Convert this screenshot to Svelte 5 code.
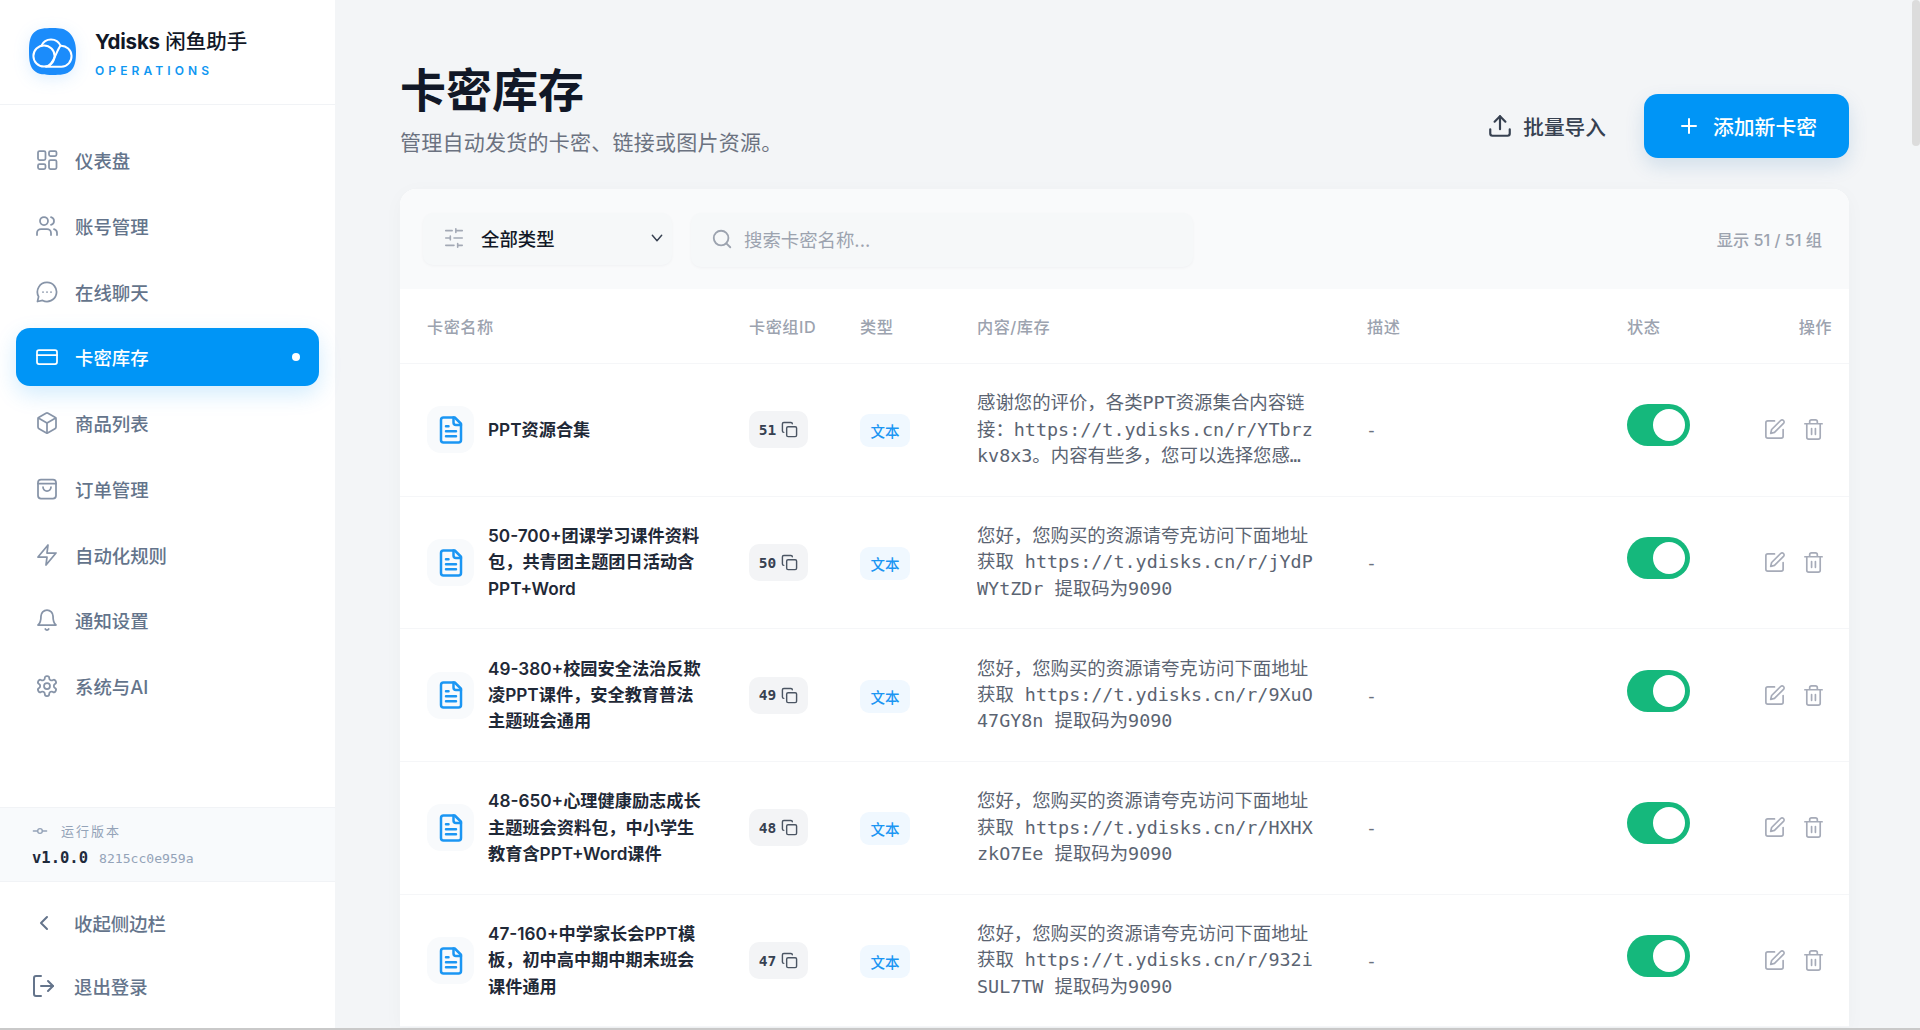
<script>
  const nav = [
    { label: '仪表盘', icon: 'grid' },
    { label: '账号管理', icon: 'users' },
    { label: '在线聊天', icon: 'chat' },
    { label: '卡密库存', icon: 'card', active: true },
    { label: '商品列表', icon: 'box' },
    { label: '订单管理', icon: 'bag' },
    { label: '自动化规则', icon: 'zap' },
    { label: '通知设置', icon: 'bell' },
    { label: '系统与AI', icon: 'gear' }
  ];

  const rows = [
    { id: 51, name: 'PPT资源合集', content: '感谢您的评价，各类PPT资源集合内容链接：https://t.ydisks.cn/r/YTbrzkv8x3。内容有些多，您可以选择您感兴趣的资源查看。' },
    { id: 50, name: '50-700+团课学习课件资料包，共青团主题团日活动含PPT+Word', content: '您好，您购买的资源请夸克访问下面地址获取 https://t.ydisks.cn/r/jYdPWYtZDr 提取码为9090' },
    { id: 49, name: '49-380+校园安全法治反欺凌PPT课件，安全教育普法主题班会通用', content: '您好，您购买的资源请夸克访问下面地址获取 https://t.ydisks.cn/r/9XuO47GY8n 提取码为9090' },
    { id: 48, name: '48-650+心理健康励志成长主题班会资料包，中小学生教育含PPT+Word课件', content: '您好，您购买的资源请夸克访问下面地址获取 https://t.ydisks.cn/r/HXHXzkO7Ee 提取码为9090' },
    { id: 47, name: '47-160+中学家长会PPT模板，初中高中期中期末班会课件通用', content: '您好，您购买的资源请夸克访问下面地址获取 https://t.ydisks.cn/r/932iSUL7TW 提取码为9090' }
  ];
</script>

<div class="page">
  <aside class="sidebar">
    <div class="brand">
      <svg class="logo" viewBox="0 0 47 47" width="47" height="47" aria-hidden="true">
        <path d="M23.5 0C31 0 36 .6 40 4.5S47 14 47 23.5 46 38.5 42 42.5 31 47 23.5 47 9 46.5 5 42.5 0 33 0 23.5 1 8.5 5 4.5 16 0 23.5 0z" fill="#1b8cfb" />
        <g fill="none" stroke="#fff" stroke-width="2" stroke-linecap="round" stroke-linejoin="round">
          <circle cx="15" cy="28" r="10.6" />
          <path d="M12.4 17.7A10.5 10.5 0 0 1 31.6 17.7" />
          <path d="M17 38.7H32.5A10.5 10.5 0 1 0 31.6 17.7C27.5 22 27 31 19.5 38.5" />
        </g>
      </svg>
      <div class="brand-text">
        <div class="brand-name"><b>Ydisks</b> 闲鱼助手</div>
        <div class="brand-sub">OPERATIONS</div>
      </div>
    </div>

    <nav class="nav">
      {#each nav as item}
        <div class="nav-item" class:active={item.active}>
          <svg class="ico" viewBox="0 0 24 24" width="24" height="24" fill="none" stroke="currentColor" stroke-width="1.75" stroke-linecap="round" stroke-linejoin="round" aria-hidden="true">
            {#if item.icon === 'grid'}
              <rect x="3" y="3" width="7.5" height="9" rx="1.5" />
              <rect x="14" y="3" width="7.5" height="5" rx="1.5" />
              <rect x="14" y="12" width="7.5" height="9" rx="1.5" />
              <rect x="3" y="16" width="7.5" height="5" rx="1.5" />
            {:else if item.icon === 'users'}
              <path d="M16 21v-2a4 4 0 0 0-4-4H6a4 4 0 0 0-4 4v2" />
              <circle cx="9" cy="7" r="4" />
              <path d="M22 21v-2a4 4 0 0 0-3-3.87" />
              <path d="M16 3.13a4 4 0 0 1 0 7.75" />
            {:else if item.icon === 'chat'}
              <path d="M12 2.5a9.5 9.5 0 1 1-4.4 17.9L2.5 21.5l1.1-4.9A9.5 9.5 0 0 1 12 2.5z" />
              <path d="M8 12h.01M12 12h.01M16 12h.01" />
            {:else if item.icon === 'card'}
              <rect x="2" y="5" width="20" height="14" rx="2" />
              <path d="M2 10h20" />
            {:else if item.icon === 'box'}
              <path d="M21 8a2 2 0 0 0-1-1.73l-7-4a2 2 0 0 0-2 0l-7 4A2 2 0 0 0 3 8v8a2 2 0 0 0 1 1.73l7 4a2 2 0 0 0 2 0l7-4A2 2 0 0 0 21 16z" />
              <path d="M3.3 7 12 12l8.7-5" />
              <path d="M12 22V12" />
            {:else if item.icon === 'bag'}
              <rect x="3" y="2.5" width="18" height="19" rx="3" />
              <path d="M3 6.5h18" />
              <path d="M8 10a4 4 0 0 0 8 0" />
            {:else if item.icon === 'zap'}
              <path d="M13 2 3 14h9l-1 8 10-12h-9z" />
            {:else if item.icon === 'bell'}
              <path d="M6 8a6 6 0 0 1 12 0c0 7 3 9 3 9H3s3-2 3-9" />
              <path d="M10.3 21a1.94 1.94 0 0 0 3.4 0" />
            {:else if item.icon === 'gear'}
              <path d="M12.22 2h-.44a2 2 0 0 0-2 2v.18a2 2 0 0 1-1 1.73l-.43.25a2 2 0 0 1-2 0l-.15-.08a2 2 0 0 0-2.73.73l-.22.38a2 2 0 0 0 .73 2.73l.15.1a2 2 0 0 1 1 1.72v.51a2 2 0 0 1-1 1.74l-.15.09a2 2 0 0 0-.73 2.73l.22.38a2 2 0 0 0 2.73.73l.15-.08a2 2 0 0 1 2 0l.43.25a2 2 0 0 1 1 1.73V20a2 2 0 0 0 2 2h.44a2 2 0 0 0 2-2v-.18a2 2 0 0 1 1-1.73l.43-.25a2 2 0 0 1 2 0l.15.08a2 2 0 0 0 2.73-.73l.22-.39a2 2 0 0 0-.73-2.73l-.15-.08a2 2 0 0 1-1-1.74v-.5a2 2 0 0 1 1-1.74l.15-.09a2 2 0 0 0 .73-2.73l-.22-.38a2 2 0 0 0-2.73-.73l-.15.08a2 2 0 0 1-2 0l-.43-.25a2 2 0 0 1-1-1.73V4a2 2 0 0 0-2-2z" />
              <circle cx="12" cy="12" r="3" />
            {/if}
          </svg>
          <span>{item.label}</span>
          {#if item.active}<i class="dot"></i>{/if}
        </div>
      {/each}
    </nav>

    <div class="version">
      <div class="version-label">
        <svg viewBox="0 0 24 24" width="16" height="16" fill="none" stroke="currentColor" stroke-width="2" stroke-linecap="round" aria-hidden="true">
          <circle cx="12" cy="12" r="3.5" />
          <path d="M2 12h6.5M15.5 12H22" />
        </svg>
        <span>运行版本</span>
      </div>
      <div class="version-line"><b>v1.0.0</b><span>8215cc0e959a</span></div>
    </div>

    <div class="foot">
      <div class="foot-item">
        <svg viewBox="0 0 24 24" width="24" height="24" fill="none" stroke="currentColor" stroke-width="2" stroke-linecap="round" stroke-linejoin="round" aria-hidden="true">
          <path d="m15 18-6-6 6-6" />
        </svg>
        <span>收起侧边栏</span>
      </div>
      <div class="foot-item">
        <svg viewBox="0 0 24 24" width="24" height="24" fill="none" stroke="currentColor" stroke-width="2" stroke-linecap="round" stroke-linejoin="round" aria-hidden="true">
          <path d="M9 2H4a2 2 0 0 0-2 2v16a2 2 0 0 0 2 2h5" />
          <path d="m16 17 5-5-5-5" />
          <path d="M21 12H9" />
        </svg>
        <span>退出登录</span>
      </div>
    </div>
  </aside>

  <main class="main">
    <header class="head">
      <div>
        <h1>卡密库存</h1>
        <p>管理自动发货的卡密、链接或图片资源。</p>
      </div>
      <div class="head-actions">
        <button type="button" class="btn-import">
          <svg viewBox="0 0 24 24" width="26" height="26" fill="none" stroke="currentColor" stroke-width="2" stroke-linecap="round" stroke-linejoin="round" aria-hidden="true">
            <path d="M21 15v4a2 2 0 0 1-2 2H5a2 2 0 0 1-2-2v-4" />
            <path d="m17 8-5-5-5 5" />
            <path d="M12 3v12" />
          </svg>
          批量导入
        </button>
        <button type="button" class="btn-add">
          <svg viewBox="0 0 24 24" width="24" height="24" fill="none" stroke="currentColor" stroke-width="2" stroke-linecap="round" aria-hidden="true">
            <path d="M5 12h14M12 5v14" />
          </svg>
          添加新卡密
        </button>
      </div>
    </header>

    <section class="card">
      <div class="toolbar">
        <div class="select">
          <svg viewBox="0 0 24 24" width="22" height="22" fill="none" stroke="#a3a9b5" stroke-width="1.75" stroke-linecap="round" aria-hidden="true">
            <path d="M21 4h-7M10 4H3M21 12h-9M8 12H3M21 20h-5M12 20H3M14 2v4M8 10v4M16 18v4" />
          </svg>
          <span>全部类型</span>
          <svg class="chev" viewBox="0 0 24 24" width="16" height="16" fill="none" stroke="#374151" stroke-width="2.2" stroke-linecap="round" stroke-linejoin="round" aria-hidden="true">
            <path d="m5 8 7 8 7-8" />
          </svg>
        </div>
        <div class="search">
          <svg viewBox="0 0 24 24" width="22" height="22" fill="none" stroke="#9ca3af" stroke-width="2" stroke-linecap="round" aria-hidden="true">
            <circle cx="11" cy="11" r="8" />
            <path d="m21 21-4.3-4.3" />
          </svg>
          <span>搜索卡密名称...</span>
        </div>
        <div class="count">显示 51 / 51 组</div>
      </div>

      <div class="cols thead">
        <div class="c-name">卡密名称</div>
        <div>卡密组ID</div>
        <div>类型</div>
        <div>内容/库存</div>
        <div>描述</div>
        <div>状态</div>
        <div class="c-op">操作</div>
      </div>

      {#each rows as row}
        <div class="cols row">
          <div class="c-name name">
            <span class="doc">
              <svg viewBox="0 0 24 24" width="30" height="30" fill="none" stroke="#1b96f3" stroke-width="2" stroke-linecap="round" stroke-linejoin="round" aria-hidden="true">
                <path d="M15 2H6a2 2 0 0 0-2 2v16a2 2 0 0 0 2 2h12a2 2 0 0 0 2-2V7z" />
                <path d="M14 2v4a2 2 0 0 0 2 2h4" />
                <path d="M10 9H8M16 13H8M16 17H8" />
              </svg>
            </span>
            <span class="name-text">{row.name}</span>
          </div>
          <div>
            <span class="chip">
              {row.id}
              <svg viewBox="0 0 24 24" width="17" height="17" fill="none" stroke="#4b5563" stroke-width="2" stroke-linecap="round" stroke-linejoin="round" aria-hidden="true">
                <rect x="8" y="8" width="14" height="14" rx="2" />
                <path d="M4 16c-1.1 0-2-.9-2-2V4c0-1.1.9-2 2-2h10c1.1 0 2 .9 2 2" />
              </svg>
            </span>
          </div>
          <div><span class="tag">文本</span></div>
          <div class="content"><span>{row.content}</span></div>
          <div class="desc">-</div>
          <div><span class="toggle"><i></i></span></div>
          <div class="ops">
            <svg viewBox="0 0 24 24" width="23" height="23" fill="none" stroke="#a6abb8" stroke-width="1.75" stroke-linecap="round" stroke-linejoin="round" aria-hidden="true">
              <path d="M12 3H5a2 2 0 0 0-2 2v14a2 2 0 0 0 2 2h14a2 2 0 0 0 2-2v-7" />
              <path d="M18.4 2.6a2.12 2.12 0 0 1 3 3L12 15l-4 1 1-4z" />
            </svg>
            <svg viewBox="0 0 24 24" width="23" height="23" fill="none" stroke="#a6abb8" stroke-width="1.75" stroke-linecap="round" stroke-linejoin="round" aria-hidden="true">
              <path d="M3 6h18M19 6v14a2 2 0 0 1-2 2H7a2 2 0 0 1-2-2V6M8 6V4a2 2 0 0 1 2-2h4a2 2 0 0 1 2 2v2M10 11v6M14 11v6" />
            </svg>
          </div>
        </div>
      {/each}
    </section>

    <div class="thumb"></div>
  </main>
  <div class="edge"></div>
</div>

<style>
  :global(body) {
    margin: 0;
    font-family: Inter, "Noto Sans CJK SC", sans-serif;
    color: #1f2937;
    background: #f3f5f7;
  }
  .page {
    position: relative;
    display: flex;
    height: 1030px;
    overflow: hidden;
  }

  /* sidebar */
  .sidebar {
    flex: 0 0 335px;
    display: flex;
    flex-direction: column;
    background: #fff;
  }
  .brand {
    display: flex;
    align-items: flex-start;
    gap: 19px;
    height: 105px;
    padding: 28px 0 0 29px;
    box-sizing: border-box;
    border-bottom: 1px solid #f1f3f6;
  }
  .logo { filter: drop-shadow(0 4px 8px rgba(27, 140, 251, 0.14)); }
  .brand-name { font-size: 20.5px; line-height: 28px; font-weight: 500; color: #111827; }
  .brand-name b { font-weight: 700; letter-spacing: -0.2px; }
  .brand-sub {
    margin-top: 6px;
    font-size: 12px;
    line-height: 18px;
    font-weight: 600;
    letter-spacing: 4.1px;
    color: #0f97f2;
  }
  .nav {
    flex: 1;
    display: flex;
    flex-direction: column;
    gap: 7.75px;
    padding: 26px 16px 0;
  }
  .nav-item {
    position: relative;
    display: flex;
    align-items: center;
    gap: 16px;
    height: 58px;
    flex: none;
    padding-left: 19px;
    border-radius: 14px;
    font-size: 18.4px;
    font-weight: 500;
    color: #64748b;
  }
  .nav-item .ico { color: #8794a8; }
  .nav-item.active {
    color: #fff;
    background: #0095f6;
    box-shadow: 0 8px 22px rgba(0, 149, 246, 0.18);
  }
  .nav-item.active .ico { color: #fff; }
  .dot {
    position: absolute;
    right: 19px;
    width: 8px;
    height: 8px;
    border-radius: 50%;
    background: #fff;
  }
  .version {
    height: 75px;
    padding: 13px 0 0 32px;
    box-sizing: border-box;
    background: #f8fafc;
    border-top: 1px solid #f1f3f6;
    border-bottom: 1px solid #f1f3f6;
  }
  .version-label {
    display: flex;
    align-items: center;
    gap: 13px;
    font-size: 13px;
    line-height: 20px;
    letter-spacing: 2px;
    color: #94a3b8;
  }
  .version-line {
    display: flex;
    align-items: baseline;
    gap: 11px;
    margin-top: 6px;
    font-family: "DejaVu Sans Mono", monospace;
    line-height: 22px;
  }
  .version-line b { font-size: 15.5px; color: #1e293b; }
  .version-line span { font-size: 13.1px; color: #94a3b8; }
  .foot {
    display: flex;
    flex-direction: column;
    gap: 5px;
    padding: 12px 0 15px;
  }
  .foot-item {
    display: flex;
    align-items: center;
    gap: 18px;
    height: 58px;
    padding-left: 32px;
    font-size: 18.4px;
    font-weight: 500;
    color: #64748b;
  }

  /* main */
  .main {
    position: relative;
    flex: 1;
    padding: 60px 71px 0 65px;
    min-width: 0;
  }
  .head {
    display: flex;
    justify-content: space-between;
    align-items: flex-end;
    margin-bottom: 32px;
  }
  h1 {
    margin: 0;
    font-size: 46px;
    line-height: 60px;
    font-weight: 700;
    color: #111827;
  }
  .head p {
    margin: 9px 0 0;
    font-size: 21px;
    line-height: 28px;
    letter-spacing: 0.25px;
    color: #6b7280;
  }
  .head-actions { display: flex; align-items: center; gap: 38px; margin-bottom: -1px; }
  button { font: inherit; border: none; background: none; padding: 0; }
  .btn-import {
    display: flex;
    align-items: center;
    gap: 10px;
    font-size: 20.7px;
    font-weight: 500;
    color: #374151;
  }
  .btn-add {
    display: flex;
    align-items: center;
    gap: 12px;
    width: 205px;
    height: 64px;
    padding-left: 33px;
    box-sizing: border-box;
    border-radius: 14px;
    font-size: 20.8px;
    font-weight: 500;
    color: #fff;
    background: #0095f6;
    box-shadow: 0 8px 20px rgba(0, 90, 160, 0.14);
  }
  .card {
    background: #fff;
    border-radius: 16px 16px 0 0;
    box-shadow: 0 4px 20px rgba(17, 24, 39, 0.03);
  }
  .toolbar {
    display: flex;
    align-items: flex-start;
    height: 100px;
    padding: 24px 27px 0 23px;
    box-sizing: border-box;
    background: #f9fafb;
    border-radius: 16px 16px 0 0;
  }
  .select, .search {
    display: flex;
    align-items: center;
    box-sizing: border-box;
    border-radius: 10px;
    background: #f6f8f9;
    box-shadow: 0 1px 3px rgba(17, 24, 39, 0.04);
    font-size: 18.4px;
  }
  .select {
    width: 249px;
    height: 52px;
    padding: 0 7px 2px 20px;
    gap: 16px;
    font-weight: 500;
    color: #111827;
  }
  .chev { margin-left: auto; }
  .search {
    width: 502px;
    height: 54px;
    margin-left: 19px;
    padding: 0 0 2px 20px;
    gap: 11px;
    color: #9ca3af;
  }
  .count {
    align-self: center;
    margin: -24px 0 0 auto;
    font-size: 16.2px;
    font-weight: 500;
    color: #9ca3af;
  }

  .cols {
    display: grid;
    grid-template-columns: 349px 111px 117px 390px 260px 138px 84px;
    align-items: center;
  }
  .thead {
    height: 75px;
    padding-bottom: 1px;
    box-sizing: border-box;
    font-size: 16.2px;
    font-weight: 500;
    letter-spacing: 0.5px;
    color: #9ca3af;
    border-bottom: 1px solid #f5f6f8;
  }
  .c-name { padding-left: 27px; }
  .c-op { text-align: right; padding-right: 17px; }
  .row {
    height: 132.7px;
    box-sizing: border-box;
    border-bottom: 1px solid #f5f6f8;
  }
  .name { display: flex; align-items: center; gap: 14px; }
  .doc {
    flex: none;
    display: flex;
    align-items: center;
    justify-content: center;
    width: 47px;
    height: 47px;
    border-radius: 14px;
    background: #f8fafc;
  }
  .name-text {
    width: 216px;
    font-size: 17.2px;
    line-height: 26.3px;
    font-weight: 600;
    color: #1f2937;
  }
  .chip {
    display: inline-flex;
    align-items: center;
    justify-content: center;
    gap: 5px;
    width: 59px;
    height: 37px;
    border-radius: 10px;
    background: #f3f4f6;
    font-family: "DejaVu Sans Mono", monospace;
    font-size: 14.5px;
    font-weight: 700;
    color: #374151;
    vertical-align: middle;
  }
  .tag {
    display: inline-flex;
    align-items: center;
    justify-content: center;
    width: 50px;
    height: 33px;
    margin-top: 2px;
    border-radius: 9px;
    background: #f0f8ff;
    color: #1b96f3;
    font-size: 14.5px;
    font-weight: 500;
    vertical-align: middle;
  }
  .content span {
    display: -webkit-box;
    -webkit-box-orient: vertical;
    -webkit-line-clamp: 3;
    line-clamp: 3;
    overflow: hidden;
    width: 340px;
    font-family: "DejaVu Sans Mono", "Noto Sans CJK SC", monospace;
    font-size: 18.4px;
    line-height: 26.3px;
    color: #5b6472;
    word-break: break-all;
  }
  .desc { margin-left: -1px; font-family: "DejaVu Sans Mono", monospace; font-size: 18px; color: #6b7280; }
  .toggle {
    display: flex;
    justify-content: flex-end;
    align-items: center;
    width: 63px;
    height: 42px;
    margin-bottom: 9px;
    padding-right: 5px;
    box-sizing: border-box;
    border-radius: 21px;
    background: #15b87c;
  }
  .toggle i { width: 32px; height: 32px; border-radius: 50%; background: #fff; }
  .ops { display: flex; align-items: center; gap: 16px; margin-left: -2px; }

  .thumb {
    position: absolute;
    top: 0;
    right: 0;
    width: 8px;
    height: 146px;
    border-radius: 4px;
    background: #dcdcdc;
  }
  .edge {
    position: absolute;
    left: 0;
    right: 0;
    bottom: 0;
    height: 2px;
    background: #c9c9c9;
  }
</style>
